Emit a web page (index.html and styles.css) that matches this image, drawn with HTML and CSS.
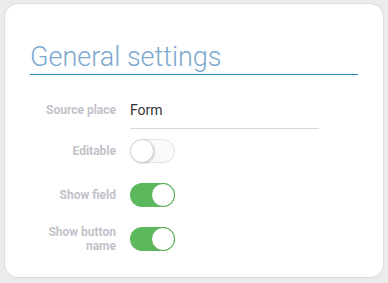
FILE: index.html
```html
<!doctype html>
<html lang="en">
  <head>
    <meta charset="UTF-8" />
    <title>General settings</title>
    <link rel="stylesheet" href="styles.css">
  </head>
  <body>
    <div class="card">
      <h2 class="card-title">General settings</h2>
      <div class="settings">
        <div class="row row-input">
          <label class="label">Source place</label>
          <div class="field">
            <input type="text" class="text-input" value="Form" />
          </div>
        </div>
        <div class="row">
          <label class="label">Editable</label>
          <div class="field">
            <span class="toggle disabled"><span class="knob"></span></span>
          </div>
        </div>
        <div class="row">
          <label class="label">Show field</label>
          <div class="field">
            <span class="toggle on"><span class="knob"></span></span>
          </div>
        </div>
        <div class="row">
          <label class="label">Show button name</label>
          <div class="field">
            <span class="toggle on"><span class="knob"></span></span>
          </div>
        </div>
      </div>
    </div>
  </body>
</html>
```

FILE: styles.css
```css
body {
  margin: 0;
  padding: 3px 4px 4px;
  background: #ebebeb;
  font-family: Roboto, "Noto Sans", sans-serif;
}
.card {
  background: #fff;
  border: 1px solid #dcdcdc;
  border-radius: 14px;
  height: 275px;
  box-sizing: border-box;
  padding: 36px 25px 0;
}
.card-title {
  margin: 0;
  font-weight: 300;
  font-size: 27px;
  line-height: 34px;
  color: #7ca8d0;
  border-bottom: 1.5px solid #2a88b8;
}
.settings {
  padding-top: 25px;
}
.row {
  display: flex;
  align-items: center;
  height: 24px;
  margin-bottom: 20px;
}
.row-input {
  align-items: flex-start;
  height: auto;
  margin-bottom: 10px;
}
.row-input .label {
  padding-top: 3px;
}
.label {
  width: 86px;
  text-align: right;
  padding-right: 14px;
  font-size: 12px;
  font-weight: 700;
  color: #c2c2ca;
  line-height: 14px;
}
.text-input {
  display: block;
  width: 189px;
  border: 0;
  border-bottom: 1px solid #d8d8d8;
  padding: 2px 0 10px;
  font-family: inherit;
  font-size: 14px;
  line-height: 16px;
  color: #333;
  outline: none;
}
.toggle {
  position: relative;
  display: block;
  width: 45px;
  height: 24px;
  border-radius: 12px;
  box-sizing: border-box;
}
.toggle.disabled {
  background: #fafafa;
  border: 1px solid #e2e2e2;
}
.toggle.on {
  background: #5cb85c;
}
.knob {
  position: absolute;
  top: 0;
  width: 24px;
  height: 24px;
  border-radius: 50%;
  background: #fff;
  box-sizing: border-box;
}
.toggle.disabled .knob {
  top: -1px;
  left: -1px;
  border: 1px solid #d0d0d0;
  box-shadow: 1px 1px 2px rgba(0, 0, 0, 0.15);
}
.toggle.on .knob {
  right: 0;
  border: 1px solid #4ea64e;
}
```
